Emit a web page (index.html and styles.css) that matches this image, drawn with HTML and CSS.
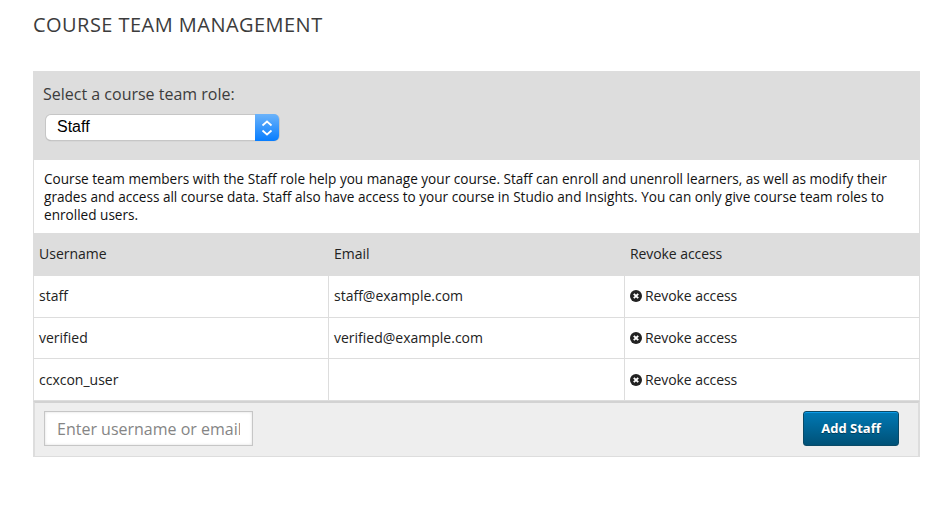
FILE: index.html
```html
<!DOCTYPE html>
<html lang="en">
<head>
<meta charset="utf-8">
<title>Course Team Management</title>
<link rel="stylesheet" href="styles.css">
</head>
<body>
<svg class="defs" aria-hidden="true"><symbol id="revoke" viewBox="0 0 12 12"><circle cx="6" cy="6" r="6" fill="#222"/><path d="M3.8 3.8l4.4 4.4M8.2 3.8l-4.4 4.4" stroke="#fff" stroke-width="1.9"/></symbol></svg>
<main>
<h1><span>COURSE TEAM MANAGEMENT</span></h1>
<section class="panel">
<header class="role">
<label><span>Select a course team role:</span></label>
<div class="select"><span class="value">Staff</span><span class="arrows"><svg width="12" height="16" viewBox="0 0 12 16" fill="none" stroke="#fff" stroke-width="1.7"><path d="M1.5 5.5L6 1.5l4.5 4M1.5 10.5l4.5 4 4.5-4"/></svg></span></div>
</header>
<p class="description"><span>Course team members with the Staff role help you manage your course. Staff can enroll and unenroll learners, as well as modify their</span><br><span>grades and access all course data. Staff also have access to your course in Studio and Insights. You can only give course team roles to</span><br><span>enrolled users.</span></p>
<div class="row head"><div>Username</div><div>Email</div><div>Revoke access</div></div>
<div class="row first"><div>staff</div><div>staff@example.com</div><div><svg class="icon"><use href="#revoke"/></svg>Revoke access</div></div>
<div class="row short"><div>verified</div><div>verified@example.com</div><div><svg class="icon"><use href="#revoke"/></svg>Revoke access</div></div>
<div class="row"><div>ccxcon_user</div><div></div><div><svg class="icon"><use href="#revoke"/></svg>Revoke access</div></div>
<footer class="bar">
<input type="text" placeholder="Enter username or email">
<button type="button">Add Staff</button>
</footer>
</section>
</main>
</body>
</html>
```

FILE: styles.css
```css
* { box-sizing: border-box; }
body { margin: 0; background: #fff; color: #222; font: 14px/18px "Open Sans", sans-serif; }
.defs { display: none; }
main { width: 887px; margin-left: 33px; }
h1 { margin: 0; height: 71px; padding-top: 11px; font-size: 20px; line-height: 28px; font-weight: 400; letter-spacing: 0.46px; color: #3c3c3c; }
.role { height: 89px; padding: 12px 10px 0; background: #ddd; }
.role label { display: block; height: 22px; font-size: 16px; line-height: 22px; color: #3c3c3c; }
.select { display: flex; width: 233px; height: 25px; margin: 10px 0 0 3px; border-radius: 5px; background: #fff; box-shadow: 0 0 0 1px #c6c6c6, 0 1px 1px #999; }
.value { flex: 1; padding-left: 11px; font: 16px/24px "Liberation Sans", sans-serif; color: #000; }
.arrows { display: flex; width: 24px; height: 27px; margin-top: -1px; border-radius: 0 5px 5px 0; align-items: center; justify-content: center; background: linear-gradient(#6bb3fa, #077dff); }
.description { height: 73px; margin: 0; padding: 10px 10px 0; border: solid #ddd; border-width: 0 1px; font-size: 13.6px; color: #111; white-space: nowrap; }
.row { display: grid; grid-template-columns: 295px 296px 1fr; height: 42px; border-left: 1px solid #ddd; }
.row > div { display: flex; align-items: center; padding: 0 5px; border: solid #ddd; border-width: 0 1px 1px 0; }
.row > div:last-child { letter-spacing: -0.08px; }
.row.head { height: 43px; background: #ddd; }
.row.first > div { padding-bottom: 1px; }
.row.short { height: 41px; }
.icon { width: 12px; height: 12px; margin-right: 3px; }
.bar { display: flex; justify-content: space-between; align-items: flex-start; height: 56px; padding: 8px 19px 0 9px; background: #eee; border: solid #ddd; border-width: 2px 2px 1px; border-top-color: #d2d2d2; }
.bar input { width: 209px; height: 35px; padding: 0 12px; border: 1px solid #c6c6c6; border-radius: 0; background: #fff; box-shadow: inset 0 0 3px #ddd; font: 16px "Open Sans", sans-serif; }
.bar input::placeholder { color: #858585; opacity: 1; }
.bar button { width: 96px; height: 35px; padding: 0 0 2px; border: 1px solid #0a4a67; border-radius: 3px; background: linear-gradient(#0079b5, #005177); box-shadow: inset 0 1px 0 #0b9be8; color: #fff; font: 700 13px "Open Sans", sans-serif; text-shadow: 0 1px 0 #003d5b; }
```
